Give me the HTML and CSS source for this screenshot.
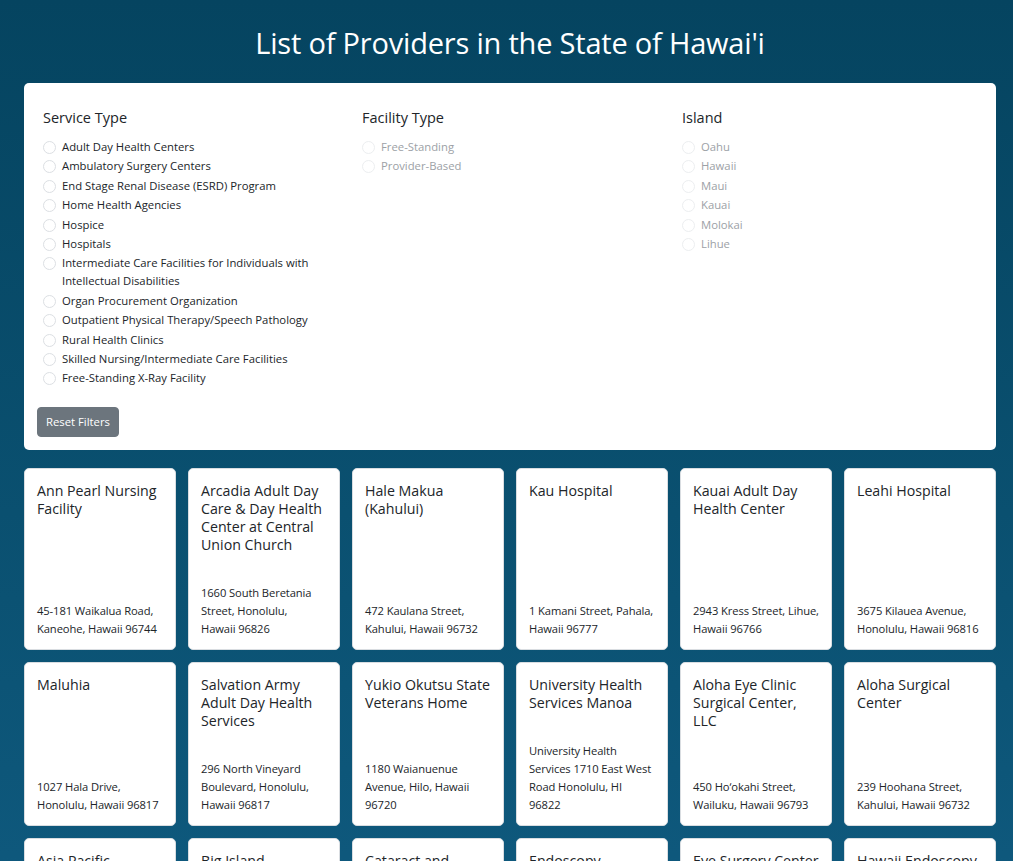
FILE: index.html
```html
<!DOCTYPE html>
<html lang="en">
<head>
<meta charset="utf-8">
<title>List of Providers in the State of Hawai'i</title>
<link rel="stylesheet" href="styles.css">
</head>
<body>
<div class="page">
  <h1 class="page-title">List of Providers in the State of Hawai'i</h1>

  <section class="filters">
    <div class="filter-grid">
      <div class="filter-col">
        <h2 class="filter-title">Service Type</h2>
        <ul class="option-list">
          <li class="option"><span class="radio"></span><span class="label">Adult Day Health Centers</span></li>
          <li class="option"><span class="radio"></span><span class="label">Ambulatory Surgery Centers</span></li>
          <li class="option"><span class="radio"></span><span class="label">End Stage Renal Disease (ESRD) Program</span></li>
          <li class="option"><span class="radio"></span><span class="label">Home Health Agencies</span></li>
          <li class="option"><span class="radio"></span><span class="label">Hospice</span></li>
          <li class="option"><span class="radio"></span><span class="label">Hospitals</span></li>
          <li class="option"><span class="radio"></span><span class="label">Intermediate Care Facilities for Individuals with Intellectual Disabilities</span></li>
          <li class="option"><span class="radio"></span><span class="label">Organ Procurement Organization</span></li>
          <li class="option"><span class="radio"></span><span class="label">Outpatient Physical Therapy/Speech Pathology</span></li>
          <li class="option"><span class="radio"></span><span class="label">Rural Health Clinics</span></li>
          <li class="option"><span class="radio"></span><span class="label">Skilled Nursing/Intermediate Care Facilities</span></li>
          <li class="option"><span class="radio"></span><span class="label">Free-Standing X-Ray Facility</span></li>
        </ul>
      </div>
      <div class="filter-col">
        <h2 class="filter-title">Facility Type</h2>
        <ul class="option-list disabled">
          <li class="option"><span class="radio"></span><span class="label">Free-Standing</span></li>
          <li class="option"><span class="radio"></span><span class="label">Provider-Based</span></li>
        </ul>
      </div>
      <div class="filter-col">
        <h2 class="filter-title">Island</h2>
        <ul class="option-list disabled">
          <li class="option"><span class="radio"></span><span class="label">Oahu</span></li>
          <li class="option"><span class="radio"></span><span class="label">Hawaii</span></li>
          <li class="option"><span class="radio"></span><span class="label">Maui</span></li>
          <li class="option"><span class="radio"></span><span class="label">Kauai</span></li>
          <li class="option"><span class="radio"></span><span class="label">Molokai</span></li>
          <li class="option"><span class="radio"></span><span class="label">Lihue</span></li>
        </ul>
      </div>
    </div>
    <button class="reset-btn" type="button">Reset Filters</button>
  </section>

  <section class="cards">
    <article class="card"><h3 class="card-title">Ann Pearl Nursing Facility</h3><p class="card-addr">45-181 Waikalua Road, Kaneohe, Hawaii&nbsp;96744</p></article>
    <article class="card"><h3 class="card-title">Arcadia Adult Day Care &amp; Day Health Center at Central Union Church</h3><p class="card-addr">1660 South Beretania Street, Honolulu, Hawaii&nbsp;96826</p></article>
    <article class="card"><h3 class="card-title">Hale Makua (Kahului)</h3><p class="card-addr">472 Kaulana Street, Kahului, Hawaii&nbsp;96732</p></article>
    <article class="card"><h3 class="card-title">Kau Hospital</h3><p class="card-addr">1 Kamani Street, Pahala, Hawaii&nbsp;96777</p></article>
    <article class="card"><h3 class="card-title">Kauai Adult Day Health Center</h3><p class="card-addr">2943 Kress Street, Lihue, Hawaii&nbsp;96766</p></article>
    <article class="card"><h3 class="card-title">Leahi Hospital</h3><p class="card-addr">3675 Kilauea Avenue, Honolulu, Hawaii&nbsp;96816</p></article>

    <article class="card"><h3 class="card-title">Maluhia</h3><p class="card-addr">1027 Hala Drive, Honolulu, Hawaii&nbsp;96817</p></article>
    <article class="card"><h3 class="card-title">Salvation Army Adult Day Health Services</h3><p class="card-addr">296 North Vineyard Boulevard, Honolulu, Hawaii&nbsp;96817</p></article>
    <article class="card"><h3 class="card-title">Yukio Okutsu State Veterans Home</h3><p class="card-addr">1180 Waianuenue Avenue, Hilo, Hawaii 96720</p></article>
    <article class="card"><h3 class="card-title">University Health Services Manoa</h3><p class="card-addr">University Health Services 1710 East West Road Honolulu, HI 96822</p></article>
    <article class="card"><h3 class="card-title">Aloha Eye Clinic Surgical Center, LLC</h3><p class="card-addr">450 Ho‘okahi Street, Wailuku, Hawaii&nbsp;96793</p></article>
    <article class="card"><h3 class="card-title">Aloha Surgical Center</h3><p class="card-addr">239 Hoohana Street, Kahului, Hawaii&nbsp;96732</p></article>

    <article class="card"><h3 class="card-title">Asia Pacific Surgery Center</h3><p class="card-addr">1329 Lusitana Street, Honolulu, Hawaii&nbsp;96813</p></article>
    <article class="card"><h3 class="card-title">Big Island Endoscopy Center</h3><p class="card-addr">107 Kamana Street, Hilo, Hawaii&nbsp;96720</p></article>
    <article class="card"><h3 class="card-title">Cataract and Refractive Surgery Center</h3><p class="card-addr">1585 Kapiolani Boulevard, Honolulu, Hawaii&nbsp;96814</p></article>
    <article class="card"><h3 class="card-title">Endoscopy Institute of Hawaii</h3><p class="card-addr">2228 Liliha Street, Honolulu, Hawaii&nbsp;96817</p></article>
    <article class="card"><h3 class="card-title">Eye Surgery Center of Hawaii</h3><p class="card-addr">1329 Lusitana Street, Honolulu, Hawaii&nbsp;96813</p></article>
    <article class="card"><h3 class="card-title">Hawaii Endoscopy Center</h3><p class="card-addr">2226 Liliha Street, Honolulu, Hawaii&nbsp;96817</p></article>
  </section>
</div>
</body>
</html>
```
FILE: styles.css
```css
html, body {
  margin: 0;
  padding: 0;
}
body {
  font-family: "Open Sans", "Noto Sans", sans-serif;
  color: #212529;
  background: linear-gradient(180deg, #054460 0%, #0a5070 50%, #105c82 100%);
  min-height: 861px;
}
.page {
  width: 972px;
  margin: 0 0 0 24px;
  padding-bottom: 24px;
}
.page-title {
  margin: 0;
  padding: 24px 0 0;
  height: 83px;
  box-sizing: border-box;
  text-align: center;
  color: #fff;
  font-weight: 400;
  font-size: 29px;
  line-height: 38px;
  letter-spacing: -0.2px;
}
.filters {
  background: #fff;
  border-radius: 5px;
  padding: 24px 13px 13px;
}
.filter-grid {
  display: grid;
  grid-template-columns: 319px 320px 1fr;
}
.filter-col {
  padding-left: 6px;
}
.filter-title {
  margin: 0 0 9px;
  font-size: 14.5px;
  font-weight: 400;
  line-height: 22px;
  color: #212529;
}
.option-list {
  list-style: none;
  margin: 0;
  padding: 0;
}
.option {
  display: flex;
  align-items: flex-start;
  margin-bottom: 1.4px;
}
.radio {
  flex: none;
  width: 11px;
  height: 11px;
  border: 1px solid #dcdfe3;
  border-radius: 50%;
  margin: 3px 6px 0 0;
  background: #fff;
}
.label {
  font-size: 11.3px;
  line-height: 18px;
  color: #212529;
}
.disabled .label {
  color: #9ca1a6;
}
.disabled .radio {
  border-color: #eceef0;
}
.reset-btn {
  margin-top: 18px;
  display: block;
  font-family: inherit;
  font-size: 11.3px;
  line-height: 18px;
  color: #fff;
  background: #6c757d;
  border: 1px solid #6c757d;
  border-radius: 4px;
  padding: 5px 8px;
  height: 30px;
}
.cards {
  margin-top: 18px;
  display: grid;
  grid-template-columns: repeat(6, 1fr);
  gap: 12px;
}
.card {
  background: #fff;
  border: 1px solid #d9dde1;
  border-radius: 5px;
  padding: 13px 12px 11px;
  display: flex;
  flex-direction: column;
  justify-content: space-between;
}
.card-title {
  margin: 0 0 30px;
  font-size: 14.2px;
  font-weight: 400;
  line-height: 18px;
  color: #212529;
}
.card-addr {
  margin: 0;
  font-size: 11.2px;
  line-height: 18px;
  letter-spacing: -0.1px;
  color: #212529;
}
```
